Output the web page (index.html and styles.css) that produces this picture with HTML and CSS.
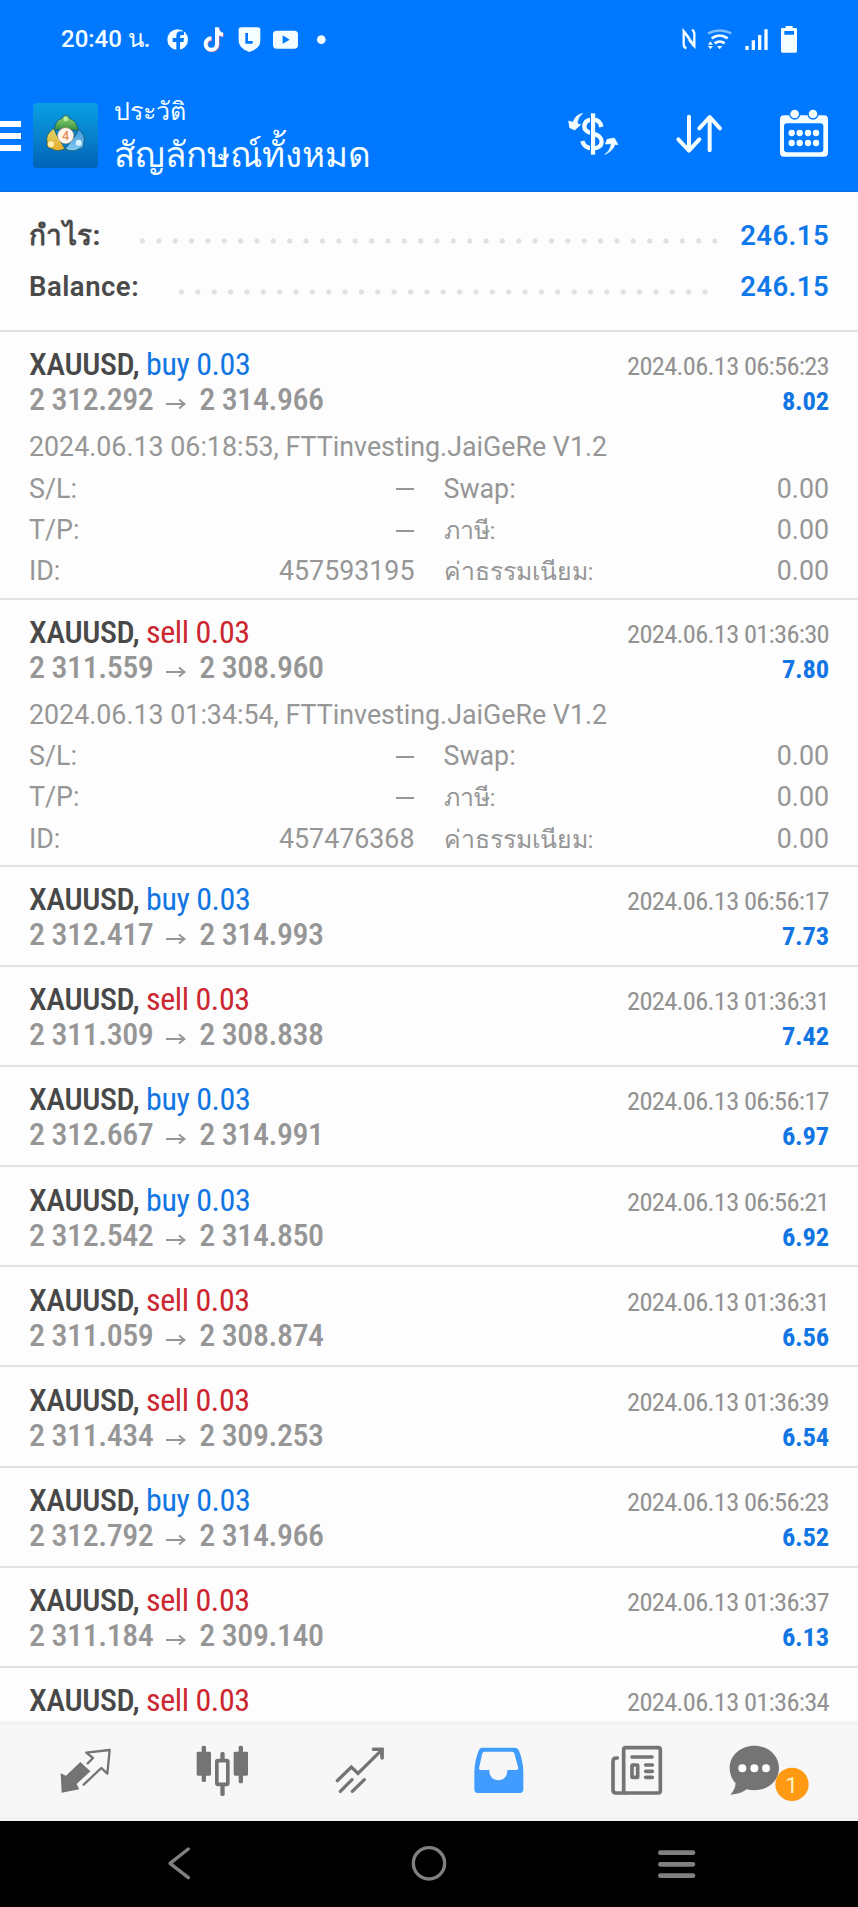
FILE: index.html
```html
<!DOCTYPE html>
<html lang="th">
<head>
<meta charset="utf-8">
<title>ประวัติ</title>
<link rel="stylesheet" href="styles.css">
</head>
<body>
<header class="header">
  <div class="status">
    <span class="clock">20:40 น.</span>
    <svg class="status-left" viewBox="495 70 500 90">
      <circle cx="533" cy="117" r="31" fill="#f4fdff"/>
      <path d="M529 149V124H518V112H529V105Q529 92 543 92H552V103H545Q540 103 540 108V112H552L550 124H540V149Z" fill="#0078ff"/>
      <g fill="none" stroke-width="12">
        <path d="M651 80V130A17 17 0 1 1 634 113M651 82Q653 100 669 102" stroke="#d0689c" transform="translate(2 2)"/>
        <path d="M651 80V130A17 17 0 1 1 634 113M651 82Q653 100 669 102" stroke="#f4fdff"/>
      </g>
      <path d="M716 86Q716 80 724 80H773Q781 80 781 86V120Q781 143 748 154Q716 143 716 120Z" fill="#f4fdff"/>
      <path d="M740 97V125H758" fill="none" stroke="#0078ff" stroke-width="8"/>
      <rect x="819" y="90" width="75" height="54" rx="11" fill="#f4fdff"/>
      <path d="M848 104L869 117L848 129Z" fill="#0078ff"/>
      <circle cx="964" cy="117" r="13" fill="#f4fdff"/>
    </svg>
    <svg class="status-right" viewBox="750 70 360 90">
      <path d="M769 143Q761 140 761 130V92L793 135V100Q793 91 786 87" fill="none" stroke="#f4fdff" stroke-width="7"/>
      <path d="M761 92L777 112M777 117L793 138" stroke="#f4fdff" stroke-width="7"/>
      <g fill="none" stroke="#f4fdff" stroke-width="8">
        <path d="M834 98Q869 81 904 98" stroke="#7cbdff" stroke-width="7"/>
        <path d="M845 113Q869 96 893 113"/>
        <path d="M854 128Q869 117 884 128"/>
      </g>
      <path d="M861 136H877L869 146ZM834 132L841 122L849 132ZM834 136L841 146L849 136Z" fill="#f4fdff"/>
      <path d="M946 136h10v12h-10zM965 119h10v29h-10zM984 103h10v45h-10zM1003 86h10v62h-10z" fill="#f4fdff"/>
      <path d="M1067 76H1088V82H1098Q1101 82 1101 86V152Q1101 156 1097 156H1057Q1053 156 1053 152V86Q1053 82 1057 82H1067ZM1063 91V102H1092V91Z" fill="#f4fdff" fill-rule="evenodd"/>
    </svg>
  </div>
  <div class="appbar">
    <svg class="burger" viewBox="0 0 21 32"><path d="M0 1h21v6H0zM0 13h21v6H0zM0 25h21v6H0z" fill="#fff"/></svg>
    <svg class="logo" viewBox="0 0 195 195">
      <defs>
        <linearGradient id="sky" x1="0" y1="0" x2="0" y2="1"><stop offset="0" stop-color="#089fe4"/><stop offset=".55" stop-color="#087fca"/><stop offset="1" stop-color="#0062b8"/></linearGradient>
        <linearGradient id="green" x1="0" y1="0" x2="0" y2="1"><stop offset="0" stop-color="#9cdc7a"/><stop offset="1" stop-color="#2f8a3c"/></linearGradient>
        <linearGradient id="gold" x1="0" y1="0" x2="0" y2="1"><stop offset="0" stop-color="#d8d66a"/><stop offset="1" stop-color="#e8ad2c"/></linearGradient>
        <linearGradient id="blue" x1="0" y1="0" x2="0" y2="1"><stop offset="0" stop-color="#3d98dc"/><stop offset="1" stop-color="#83c9f4"/></linearGradient>
      </defs>
      <rect width="195" height="195" rx="11" fill="url(#sky)"/>
      <g stroke="#155a6a" stroke-width="2.5">
        <path d="M64 82Q66 50 88 46Q90 37 98 37Q107 37 109 46Q133 53 135 84L98 76Z" fill="url(#green)"/>
        <path d="M62 76Q36 94 42 118Q38 136 56 137Q72 149 96 137L72 98Z" fill="url(#gold)"/>
        <path d="M137 78Q160 98 152 120Q152 136 140 136Q124 150 96 138L126 100Z" fill="url(#blue)"/>
      </g>
      <circle cx="98" cy="48" r="7" fill="#b7efa4"/>
      <circle cx="54" cy="124" r="9" fill="#fff0b0"/>
      <circle cx="137" cy="119" r="9" fill="#d9f2ff"/>
      <circle cx="98" cy="98" r="24" fill="#fdf6ee" stroke="#b99a84" stroke-width="2"/>
      <text x="98" y="112" class="logo-digit">4</text>
    </svg>
    <div class="titles">
      <div class="subtitle">ประวัติ</div>
      <div class="title">สัญลักษณ์ทั้งหมด</div>
    </div>
    <svg class="act" viewBox="400 318 180 180">
      <g fill="none" stroke="#f4fdff" stroke-width="13">
        <path d="M487 343V467"/>
        <path d="M512 384Q508 362 487 362Q461 362 461 383Q461 398 487 404Q513 410 513 429Q512 447 487 448Q460 448 455 426"/>
      </g>
      <path d="M479.500 355V455" stroke="#0078ff" stroke-width="3"/>
      <path d="M456 343Q434 348 427 370L414 366L417 386L432 393L450 377L440 374Q439 357 456 343ZM522 466Q538 458 542 434L524 435L530 421L551 417L562 437L553 436Q545 458 522 466Z" fill="#f4fdff" stroke="#f4fdff" stroke-width="2"/>
    </svg>
    <svg class="act" viewBox="715 318 180 180">
      <path d="M775 353V452M743 421L775 455L806 421M837 454V355M806 388L837 354L868 388" fill="none" stroke="#f4fdff" stroke-width="12" stroke-linecap="round" stroke-linejoin="round"/>
    </svg>
    <svg class="act" viewBox="1032 318 180 180">
      <path d="M1062 349H1182Q1194 349 1194 361V461Q1194 473 1182 473H1062Q1050 473 1050 461V361Q1050 349 1062 349ZM1071 373Q1062 373 1062 382V451Q1062 460 1071 460H1171Q1180 460 1180 451V382Q1180 373 1171 373Z" fill="#f4fdff" fill-rule="evenodd"/>
      <g fill="#f4fdff" stroke="#0078ff" stroke-width="4"><circle cx="1094" cy="345" r="15"/><circle cx="1149" cy="345" r="15"/></g>
      <path d="M1085 402h.1M1109 402h.1M1134 402h.1M1158 402h.1M1085 432h.1M1109 432h.1M1134 432h.1M1158 432h.1" stroke="#f4fdff" stroke-width="19" stroke-linecap="round"/>
    </svg>
  </div>
</header>

<section class="summary">
  <div class="sum-row"><span class="sum-key thai">กำไร:</span><span class="dots dots-profit"></span><span class="sum-val">246.15</span></div>
  <div class="sum-row"><span class="sum-key">Balance:</span><span class="dots dots-balance"></span><span class="sum-val">246.15</span></div>
</section>

<main class="list">
  <article class="deal open">
    <div class="line"><span class="sym">XAUUSD, <i class="buy">buy 0.03</i></span><time>2024.06.13 06:56:23</time></div>
    <div class="line"><span class="price">2 312.292 <svg class="arr" viewBox="0 0 20 12"><path d="M0 6H18M13 1.5L18.5 6L13 10.5"/></svg> 2 314.966</span><b>8.02</b></div>
    <div class="info">
      <p>2024.06.13 06:18:53, FTTinvesting.JaiGeRe V1.2</p>
      <div class="cell"><span>S/L:</span><span class="dash"></span></div><div class="cell"><span>Swap:</span><span>0.00</span></div>
      <div class="cell"><span>T/P:</span><span class="dash"></span></div><div class="cell"><span class="th-label">ภาษี:</span><span>0.00</span></div>
      <div class="cell"><span>ID:</span><span>457593195</span></div><div class="cell"><span class="th-label">ค่าธรรมเนียม:</span><span>0.00</span></div>
    </div>
  </article>
  <article class="deal open">
    <div class="line"><span class="sym">XAUUSD, <i class="sell">sell 0.03</i></span><time>2024.06.13 01:36:30</time></div>
    <div class="line"><span class="price">2 311.559 <svg class="arr" viewBox="0 0 20 12"><path d="M0 6H18M13 1.5L18.5 6L13 10.5"/></svg> 2 308.960</span><b>7.80</b></div>
    <div class="info">
      <p>2024.06.13 01:34:54, FTTinvesting.JaiGeRe V1.2</p>
      <div class="cell"><span>S/L:</span><span class="dash"></span></div><div class="cell"><span>Swap:</span><span>0.00</span></div>
      <div class="cell"><span>T/P:</span><span class="dash"></span></div><div class="cell"><span class="th-label">ภาษี:</span><span>0.00</span></div>
      <div class="cell"><span>ID:</span><span>457476368</span></div><div class="cell"><span class="th-label">ค่าธรรมเนียม:</span><span>0.00</span></div>
    </div>
  </article>
  <article class="deal">
    <div class="line"><span class="sym">XAUUSD, <i class="buy">buy 0.03</i></span><time>2024.06.13 06:56:17</time></div>
    <div class="line"><span class="price">2 312.417 <svg class="arr" viewBox="0 0 20 12"><path d="M0 6H18M13 1.5L18.5 6L13 10.5"/></svg> 2 314.993</span><b>7.73</b></div>
  </article>
  <article class="deal">
    <div class="line"><span class="sym">XAUUSD, <i class="sell">sell 0.03</i></span><time>2024.06.13 01:36:31</time></div>
    <div class="line"><span class="price">2 311.309 <svg class="arr" viewBox="0 0 20 12"><path d="M0 6H18M13 1.5L18.5 6L13 10.5"/></svg> 2 308.838</span><b>7.42</b></div>
  </article>
  <article class="deal">
    <div class="line"><span class="sym">XAUUSD, <i class="buy">buy 0.03</i></span><time>2024.06.13 06:56:17</time></div>
    <div class="line"><span class="price">2 312.667 <svg class="arr" viewBox="0 0 20 12"><path d="M0 6H18M13 1.5L18.5 6L13 10.5"/></svg> 2 314.991</span><b>6.97</b></div>
  </article>
  <article class="deal">
    <div class="line"><span class="sym">XAUUSD, <i class="buy">buy 0.03</i></span><time>2024.06.13 06:56:21</time></div>
    <div class="line"><span class="price">2 312.542 <svg class="arr" viewBox="0 0 20 12"><path d="M0 6H18M13 1.5L18.5 6L13 10.5"/></svg> 2 314.850</span><b>6.92</b></div>
  </article>
  <article class="deal">
    <div class="line"><span class="sym">XAUUSD, <i class="sell">sell 0.03</i></span><time>2024.06.13 01:36:31</time></div>
    <div class="line"><span class="price">2 311.059 <svg class="arr" viewBox="0 0 20 12"><path d="M0 6H18M13 1.5L18.5 6L13 10.5"/></svg> 2 308.874</span><b>6.56</b></div>
  </article>
  <article class="deal">
    <div class="line"><span class="sym">XAUUSD, <i class="sell">sell 0.03</i></span><time>2024.06.13 01:36:39</time></div>
    <div class="line"><span class="price">2 311.434 <svg class="arr" viewBox="0 0 20 12"><path d="M0 6H18M13 1.5L18.5 6L13 10.5"/></svg> 2 309.253</span><b>6.54</b></div>
  </article>
  <article class="deal">
    <div class="line"><span class="sym">XAUUSD, <i class="buy">buy 0.03</i></span><time>2024.06.13 06:56:23</time></div>
    <div class="line"><span class="price">2 312.792 <svg class="arr" viewBox="0 0 20 12"><path d="M0 6H18M13 1.5L18.5 6L13 10.5"/></svg> 2 314.966</span><b>6.52</b></div>
  </article>
  <article class="deal">
    <div class="line"><span class="sym">XAUUSD, <i class="sell">sell 0.03</i></span><time>2024.06.13 01:36:37</time></div>
    <div class="line"><span class="price">2 311.184 <svg class="arr" viewBox="0 0 20 12"><path d="M0 6H18M13 1.5L18.5 6L13 10.5"/></svg> 2 309.140</span><b>6.13</b></div>
  </article>
  <article class="deal">
    <div class="line"><span class="sym">XAUUSD, <i class="sell">sell 0.03</i></span><time>2024.06.13 01:36:34</time></div>
  </article>
</main>

<nav class="tabs">
  <svg viewBox="122 243 270 180">
    <path d="M240 306L270 334L229 372L237 388L184 398L181 340L197 347Z" fill="#747474"/>
    <path d="M250 374L303 324L321 341L328 270L258 278L278 294L262 310" fill="none" stroke="#747474" stroke-width="7" stroke-linecap="round" stroke-linejoin="round"/>
  </svg>
  <svg viewBox="534 243 270 180">
    <g fill="#747474">
      <rect x="590" y="275" width="43" height="72" rx="4"/><rect x="605" y="257" width="13" height="109" rx="5"/>
      <rect x="701" y="275" width="43" height="72" rx="4"/><rect x="716" y="257" width="13" height="113" rx="5"/>
      <rect x="661" y="276" width="13" height="132" rx="5"/>
    </g>
    <rect x="650.500" y="302" width="33" height="71" rx="3" fill="#f7f7f7" stroke="#747474" stroke-width="11"/>
  </svg>
  <svg viewBox="946 243 270 180">
    <path d="M1013 362L1055 321L1075 340L1145 271M1022 394L1057 359M1058 394L1094 359M1121 268H1147V294" fill="none" stroke="#747474" stroke-width="10" stroke-linecap="round"/>
    <path d="M1117 263H1152V298L1142 288V273H1127Z" fill="#747474"/>
  </svg>
  <svg viewBox="68 243 270 180">
    <path d="M155 263H254Q261 263 265 270Q278 300 279 335V388Q279 399 268 399H143Q132 399 132 388V335Q133 300 146 270Q149 263 155 263ZM163 275Q158 275 156 280L146 325Q146 329 150 330H177V334A27 27 0 0 0 231 334V330H260Q264 329 264 325L252 280Q250 275 245 275Z" fill="#409cff" fill-rule="evenodd"/>
  </svg>
  <svg viewBox="480 243 270 180">
    <g fill="none" stroke="#747474" stroke-width="11" stroke-linejoin="round" stroke-linecap="round">
      <rect x="581" y="263" width="110" height="136" rx="6"/>
      <path d="M562 294H559Q549 294 549 304V390Q549 399 558 399H585M606 291H666M647 315H667M647 334H667M647 352H667"/>
      <rect x="606" y="315" width="17" height="37" rx="2"/>
    </g>
  </svg>
  <svg viewBox="892 243 270 180">
    <path d="M974 257C1015 257 1048 286 1048 324C1048 362 1015 391 974 391Q962 391 951 388Q934 403 902 404Q917 389 918 370Q900 351 900 324C900 286 933 257 974 257Z" fill="#747474"/>
    <g fill="#fff"><circle cx="938" cy="325" r="12"/><circle cx="974" cy="325" r="12"/><circle cx="1009" cy="325" r="12"/></g>
    <circle cx="1087" cy="373" r="50" fill="#ff9a12"/>
    <text x="1086" y="398" class="badge-text">1</text>
  </svg>
</nav>

<footer class="sysnav">
  <svg viewBox="0 0 180 120"><path d="M109 15L54 58L109 101"/></svg>
  <svg viewBox="0 0 180 120"><circle cx="90" cy="58" r="47"/></svg>
  <svg viewBox="0 0 180 120"><path d="M43 26H141M43 61H141M43 95H141" stroke-width="14"/></svg>
</footer>
</body>
</html>
```
FILE: styles.css
```css
* { box-sizing: border-box; }
body {
  margin: 0;
  width: 858px;
  height: 1907px;
  overflow: hidden;
  display: flex;
  flex-direction: column;
  background: #fdfdfd;
  font-family: Roboto, "DejaVu Sans", sans-serif;
}
svg { display: block; flex: none; }

.header { height: 192px; flex: none; background: #0078ff; color: #f4fdff; border-bottom: 1px solid #0a6fd8; }
.status { height: 78px; padding-left: 61px; display: flex; align-items: center; }
.clock { width: 104px; font-size: 24px; line-height: 30px; font-weight: 500; white-space: nowrap; }
.status-left { width: 166.670px; height: 30px; margin-top: -1px; }
.status-right { width: 120px; height: 30px; margin: -1px 0 0 348.300px; }

.appbar { display: flex; align-items: center; height: 114px; }
.burger { width: 21px; height: 32px; margin-top: 2px; }
.logo { width: 65px; height: 65px; margin-left: 12px; }
.logo-digit { font-size: 38px; font-weight: 500; fill: #e8905a; text-anchor: middle; }
.titles { flex: 1; padding: 5px 0 0 16px; }
.subtitle { font-size: 25px; line-height: 36px; }
.title { font-size: 35px; line-height: 51px; }
.act { width: 60px; height: 60px; margin-right: 45px; }
.act:last-child { margin-right: 24px; }

.summary { height: 138px; flex: none; padding: 18px 29px 0; font-size: 27.500px; font-weight: 600; }
.sum-row { height: 51.500px; display: flex; align-items: center; justify-content: space-between; line-height: 34px; }
.sum-key { color: #4a4a4a; letter-spacing: .5px; }
.thai { font-weight: 700; font-size: 28px; }
.sum-val { color: #0f78ea; letter-spacing: .4px; }
.dots { height: 6px; margin: 10px 23px 0 auto; background: radial-gradient(circle at 2.500px 3px, #e0e0e0 2.200px, transparent 3px) 0 0 / 16.370px 6px repeat-x; }
.dots-profit { width: 577px; }
.dots-balance { width: 530px; margin-right: 31px; }

.list { height: 1391px; flex: none; overflow: hidden; }
.deal { height: 100.100px; padding: 15.300px 29px 0; border-top: 2px solid #e2e2e2; }
.open { height: 267.500px; }
.line { display: flex; justify-content: space-between; align-items: baseline; height: 35px; line-height: 35px; font-family: "Roboto Condensed", Roboto, sans-serif; font-size: 32px; letter-spacing: -.43px; white-space: nowrap; }
.sym { font-weight: 500; color: #484848; }
.sym i { font-style: normal; font-weight: 400; }
.buy { color: #1176e4; }
.sell { color: #cc2630; }
.line time { font-size: 26.500px; letter-spacing: -.72px; color: #929292; }
.price { font-weight: 500; color: #969696; }
.arr { display: inline-block; width: 20px; height: 12px; margin: 0 6px; fill: none; stroke: #969696; stroke-width: 2; }
.line b { font-size: 26.500px; letter-spacing: -.2px; font-weight: 700; color: #1176e4; }

.info { margin-top: 10px; display: grid; grid-template-columns: 1fr 1fr; column-gap: 29px; font-size: 26.800px; line-height: 41.300px; color: #969696; white-space: nowrap; }
.info p { margin: 0; grid-column: 1 / 3; }
.cell { display: flex; justify-content: space-between; align-items: center; height: 41.300px; }
.th-label { font-size: 24.800px; }
.dash { width: 18px; height: 2px; background: #969696; margin-right: 1px; }

.tabs { height: 100px; flex: none; padding: 0 17px; display: flex; justify-content: space-around; align-items: center; background: #f7f7f7; border-top: 4px solid #f2f2f2; border-bottom: 4px solid #f2f2f2; }
.tabs svg { width: 90px; height: 60px; }
.badge-text { font-size: 68px; fill: #fff3c8; text-anchor: middle; }

.sysnav { height: 86px; flex: none; background: #000; display: flex; justify-content: center; align-items: center; gap: 187px; }
.sysnav svg { width: 60px; height: 40px; fill: none; stroke: #808080; stroke-width: 10; stroke-linecap: round; stroke-linejoin: round; }
```
